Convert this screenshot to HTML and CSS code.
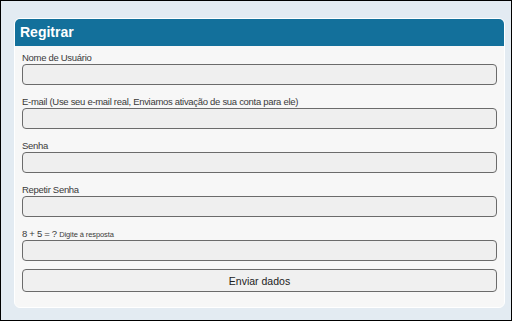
FILE: index.html
```html
<!DOCTYPE html>
<html>
<head>
<meta charset="utf-8">
<link rel="stylesheet" href="styles.css">
</head>
<body>
<div class="frame">
  <div class="panel">
    <div class="panel-head">Regitrar</div>
    <form class="panel-body">
      <div class="field">
        <label class="lbl">Nome de Usuário</label>
        <input class="inp" type="text">
      </div>
      <div class="field">
        <label class="lbl">E-mail (Use seu e-mail real, Enviamos ativação de sua conta para ele)</label>
        <input class="inp" type="text">
      </div>
      <div class="field">
        <label class="lbl">Senha</label>
        <input class="inp" type="password">
      </div>
      <div class="field">
        <label class="lbl">Repetir Senha</label>
        <input class="inp" type="password">
      </div>
      <div class="field">
        <label class="lbl">8 + 5 = ? <span class="hint">Digite á resposta</span></label>
        <input class="inp" type="text">
      </div>
      <button class="btn" type="button">Enviar dados</button>
    </form>
  </div>
</div>
</body>
</html>
```
FILE: styles.css
```css
html, body {
  margin: 0;
  padding: 0;
}
body {
  font-family: "Liberation Sans", Arial, sans-serif;
}
.frame {
  width: 512px;
  height: 321px;
  box-sizing: border-box;
  border: 1px solid #000;
  background: #e3ebf2;
  padding: 17px 6px 0 13px;
}
.panel {
  height: 290px;
  box-sizing: border-box;
  border: 1px solid #ffffff;
  border-radius: 6px;
  background: #f7f7f7;
  display: flex;
  flex-direction: column;
}
.panel-head {
  height: 27px;
  box-sizing: border-box;
  background: #13709b;
  border-radius: 5px 5px 0 0;
  color: #fff;
  font-weight: bold;
  font-size: 14px;
  line-height: 27px;
  padding-left: 5px;
}
.panel-body {
  margin: 0;
  padding: 6px 7px 0 7px;
  display: flex;
  flex-direction: column;
  gap: 11px;
}
.field {
  display: flex;
  flex-direction: column;
}
.lbl {
  font-size: 9.5px;
  letter-spacing: -0.3px;
  line-height: 12px;
  color: #3a3a3a;
  height: 12px;
}
.hint {
  font-size: 7.5px;
  letter-spacing: -0.1px;
}
.inp {
  margin: 0;
  height: 21px;
  box-sizing: border-box;
  width: 100%;
  border: 1px solid #6b6b6b;
  border-radius: 4px;
  background: #efefef;
  padding: 0 4px;
  font-family: inherit;
  font-size: 11px;
}
.btn {
  margin: -3px 0 0 0;
  height: 23px;
  box-sizing: border-box;
  width: 100%;
  border: 1px solid #6b6b6b;
  border-radius: 4px;
  background: #f0f0f0;
  color: #222;
  font-family: inherit;
  font-size: 10.5px;
  padding: 0;
}
```
